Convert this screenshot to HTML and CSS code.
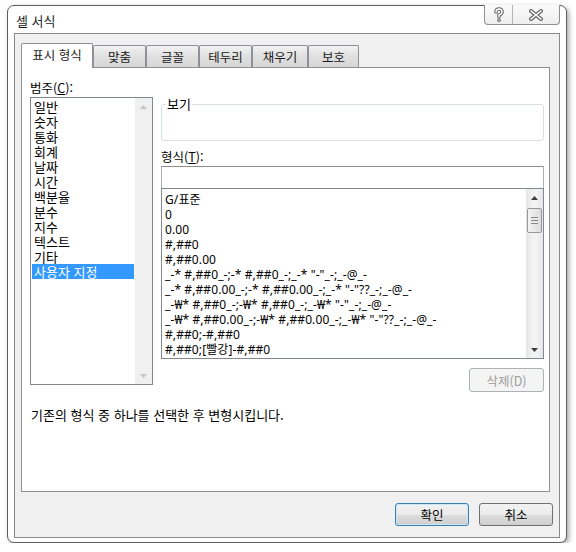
FILE: index.html
```html
<!DOCTYPE html>
<html lang="ko">
<head>
    <meta charset="UTF-8">
    <title>셀 서식</title>
    <link rel="stylesheet" href="styles.css">
</head>

<body>
    <div class="window">
        <div class="titlebar">
            <span class="title">셀 서식</span>
            <div class="caption-buttons">
                <div class="cap-btn cap-help">
                    <svg width="12" height="16" viewBox="0 0 12 16">
                        <path d="M3 5 Q3 2 6 2 Q9 2 9 5 Q9 7 6 8 L6 10" fill="none" stroke="#666" stroke-width="3.6" stroke-linecap="round"/>
                        <circle cx="6" cy="13.2" r="1.8" fill="#666"/>
                        <path d="M3 5 Q3 2 6 2 Q9 2 9 5 Q9 7 6 8 L6 10" fill="none" stroke="#fff" stroke-width="1.4" stroke-linecap="round"/>
                        <circle cx="6" cy="13.2" r="0.7" fill="#fff"/>
                    </svg>
                </div>
                <div class="cap-btn cap-close">
                    <svg width="14" height="12" viewBox="0 0 14 12">
                        <path d="M2 2 L12 10 M12 2 L2 10" stroke="#6a6a6a" stroke-width="4" stroke-linecap="square"/>
                        <path d="M2 2 L12 10 M12 2 L2 10" stroke="#fff" stroke-width="1.6" stroke-linecap="square"/>
                    </svg>
                </div>
            </div>
        </div>

        <div class="client">
            <div class="tabs">
                <div class="tab tab-active">표시 형식</div>
                <div class="tab tab-align">맞춤</div>
                <div class="tab tab-font">글꼴</div>
                <div class="tab tab-border">테두리</div>
                <div class="tab tab-fill">채우기</div>
                <div class="tab tab-protect">보호</div>
            </div>

            <div class="panel">
                <div class="panel-row">
                    <div class="left-col">
                        <div class="label">범주(<u>C</u>):</div>
                        <div class="listbox category-list">
                            <div class="list-items">
                                <div class="list-item">일반</div>
                                <div class="list-item">숫자</div>
                                <div class="list-item">통화</div>
                                <div class="list-item">회계</div>
                                <div class="list-item">날짜</div>
                                <div class="list-item">시간</div>
                                <div class="list-item">백분율</div>
                                <div class="list-item">분수</div>
                                <div class="list-item">지수</div>
                                <div class="list-item">텍스트</div>
                                <div class="list-item">기타</div>
                                <div class="list-item list-item-selected">사용자 지정</div>
                            </div>
                            <div class="scrollbar scrollbar-disabled">
                                <div class="scroll-arrow">
                                    <svg width="7" height="4" viewBox="0 0 7 4"><path d="M0 4 L3.5 0 L7 4 Z" fill="#c4c4c4"/></svg>
                                </div>
                                <div class="scroll-track"></div>
                                <div class="scroll-arrow">
                                    <svg width="7" height="4" viewBox="0 0 7 4"><path d="M0 0 L3.5 4 L7 0 Z" fill="#c4c4c4"/></svg>
                                </div>
                            </div>
                        </div>
                    </div>

                    <div class="right-col">
                        <div class="groupbox">
                            <span class="groupbox-label">보기</span>
                        </div>

                        <div class="label format-label">형식(<u>T</u>):</div>
                        <div class="textbox"></div>

                        <div class="listbox format-list">
                            <div class="list-items format-items">
                                <div class="list-item">G/표준</div>
                                <div class="list-item">0</div>
                                <div class="list-item">0.00</div>
                                <div class="list-item">#,##0</div>
                                <div class="list-item">#,##0.00</div>
                                <div class="list-item">_-* #,##0_-;-* #,##0_-;_-* "-"_-;_-@_-</div>
                                <div class="list-item">_-* #,##0.00_-;-* #,##0.00_-;_-* "-"??_-;_-@_-</div>
                                <div class="list-item">_-₩* #,##0_-;-₩* #,##0_-;_-₩* "-"_-;_-@_-</div>
                                <div class="list-item">_-₩* #,##0.00_-;-₩* #,##0.00_-;_-₩* "-"??_-;_-@_-</div>
                                <div class="list-item">#,##0;-#,##0</div>
                                <div class="list-item">#,##0;[빨강]-#,##0</div>
                            </div>
                            <div class="scrollbar">
                                <div class="scroll-arrow">
                                    <svg width="7" height="4" viewBox="0 0 7 4"><path d="M0 4 L3.5 0 L7 4 Z" fill="#3c3c3c"/></svg>
                                </div>
                                <div class="scroll-track">
                                    <div class="scroll-thumb">
                                        <span class="grip"></span>
                                        <span class="grip"></span>
                                        <span class="grip"></span>
                                    </div>
                                </div>
                                <div class="scroll-arrow">
                                    <svg width="7" height="4" viewBox="0 0 7 4"><path d="M0 0 L3.5 4 L7 0 Z" fill="#3c3c3c"/></svg>
                                </div>
                            </div>
                        </div>

                        <button class="btn btn-disabled delete-btn" disabled>삭제(D)</button>
                    </div>
                </div>

                <div class="description">기존의 형식 중 하나를 선택한 후 변형시킵니다.</div>
            </div>

            <div class="buttons">
                <button class="btn btn-default">확인</button>
                <button class="btn">취소</button>
            </div>
        </div>
    </div>
</body>
</html>
```

FILE: styles.css
```css
*
{
    box-sizing: border-box;
}

body
{
    margin: 0;
    background-color: #ffffff;
    font-family: "Noto Sans CJK KR", "Noto Sans", sans-serif;
    font-size: 12px;
    color: #000000;
}

.window
{
    margin: 5px 0 0 7px;
    width: 560px;
    height: 538px;
    border: 1px solid #5e5e5e;
    border-radius: 7px;
    background-color: #ffffff;
    box-shadow: 2px 2px 5px rgba(0, 0, 0, 0.35);
}

.titlebar
{
    display: flex;
    justify-content: space-between;
    align-items: flex-start;
    height: 27px;
}

.title
{
    padding: 7px 0 0 8px;
    line-height: 16px;
    font-size: 13px;
    color: #1e1e1e;
}

.caption-buttons
{
    display: flex;
    margin: -1px 6px 0 0;
    height: 20px;
    border: 1px solid #8f8f8f;
    border-top: none;
    border-radius: 0 0 4px 4px;
    background: linear-gradient(#fbfbfb, #eeeeee);
    overflow: hidden;
}

.cap-btn
{
    display: flex;
    justify-content: center;
    align-items: center;
}

.cap-help
{
    width: 28px;
    border-right: 1px solid #b5b5b5;
}

.cap-close
{
    width: 46px;
}

.client
{
    margin-left: 6px;
    width: 546px;
    height: 505px;
    border: 1px solid #8a8a8a;
    background-color: #f0f0f0;
}

.tabs
{
    display: flex;
    align-items: flex-end;
    height: 33px;
    padding: 9px 0 0 6px;
}

.tab
{
    height: 22px;
    border: 1px solid #8e9096;
    border-bottom: none;
    border-radius: 2px 2px 0 0;
    background: linear-gradient(#f2f2f2, #e0e0e0 50%, #d6d6d6);
    text-align: center;
    line-height: 21px;
    font-size: 12.5px;
    color: #1a1a1a;
}

.tab-active
{
    position: relative;
    z-index: 1;
    height: 25px;
    margin-bottom: -1px;
    background: #ffffff;
    line-height: 22px;
}

.tab-active { width: 72px; }
.tab-align { width: 53px; }
.tab-font { width: 53px; }
.tab-border { width: 53px; }
.tab-fill { width: 56px; }
.tab-protect { width: 51px; }

.panel
{
    margin-left: 6px;
    width: 529px;
    height: 425px;
    border: 1px solid #8e9096;
    background-color: #ffffff;
    padding: 12px 0 0 8px;
}

.panel-row
{
    display: flex;
    gap: 8px;
}

.left-col
{
    width: 123px;
}

.label
{
    line-height: 15px;
    height: 15px;
    font-size: 12.5px;
}

.listbox
{
    display: flex;
    border: 1px solid #828790;
    background-color: #ffffff;
}

.category-list
{
    margin-top: 2px;
    height: 288px;
    font-size: 13px;
}

.list-items
{
    flex: 1;
    padding-top: 1px;
    overflow: hidden;
}

.list-item
{
    height: 15px;
    line-height: 15px;
    margin: 0 1px;
    padding-left: 2px;
    white-space: nowrap;
}

.list-item-selected
{
    background-color: #3399ff;
    color: #ffffff;
}

.scrollbar
{
    width: 17px;
    display: flex;
    flex-direction: column;
    background: linear-gradient(90deg, #e6e6e6, #f3f3f3 40%, #f3f3f3 60%, #e6e6e6);
}

.scrollbar-disabled
{
    background: #f0f0f0;
}

.scroll-arrow
{
    height: 17px;
    display: flex;
    justify-content: center;
    align-items: center;
}

.scroll-track
{
    flex: 1;
    padding: 2px 1px 0 1px;
}

.scroll-thumb
{
    height: 25px;
    border: 1px solid #979797;
    border-radius: 2px;
    background: linear-gradient(90deg, #f5f5f5, #e8e8e8 50%, #dcdcdc);
    display: flex;
    flex-direction: column;
    justify-content: center;
    align-items: center;
    gap: 2px;
}

.grip
{
    width: 7px;
    height: 1px;
    background-color: #8a8a8a;
}

.right-col
{
    width: 383px;
    display: flex;
    flex-direction: column;
}

.groupbox
{
    position: relative;
    margin-top: 24px;
    height: 37px;
    border: 1px solid #d5dfe5;
    border-radius: 3px;
}

.groupbox-label
{
    position: absolute;
    top: -9px;
    left: 4px;
    padding: 0 1px;
    line-height: 15px;
    font-size: 13px;
    background-color: #ffffff;
}

.format-label
{
    margin-top: 8px;
}

.textbox
{
    margin-top: 2px;
    height: 23px;
    border: 1px solid #abadb3;
    border-top-color: #8e8f8f;
    background-color: #ffffff;
}

.format-list
{
    margin-top: -1px;
    height: 171px;
}

.format-items
{
    padding-top: 3px;
    font-family: "Noto Sans", "Noto Sans CJK KR", sans-serif;
    font-size: 12px;
    letter-spacing: 0.1px;
}

.format-items .list-item
{
    padding-left: 2px;
}

.btn
{
    height: 23px;
    border: 1px solid #707070;
    border-radius: 3px;
    background: linear-gradient(#f2f2f2, #ebebeb 50%, #dddddd 51%, #cfcfcf);
    font-family: "Noto Sans CJK KR", "Noto Sans", sans-serif;
    font-size: 12.5px;
    color: #000000;
    padding: 0;
}

.btn-default
{
    border-color: #3c7fb1;
    box-shadow: inset 0 0 0 1px #c9e7f8;
}

.btn-disabled
{
    border-color: #adb2b5;
    background: #f4f4f4;
    color: #9c9c9c;
}

.delete-btn
{
    align-self: flex-end;
    margin-top: 9px;
    width: 75px;
    height: 24px;
}

.description
{
    margin-top: 15px;
    padding-left: 1px;
    line-height: 16px;
    font-size: 13px;
}

.buttons
{
    display: flex;
    justify-content: flex-end;
    gap: 10px;
    margin-top: 11px;
    padding-right: 6px;
}

.buttons .btn
{
    width: 74px;
}
```
